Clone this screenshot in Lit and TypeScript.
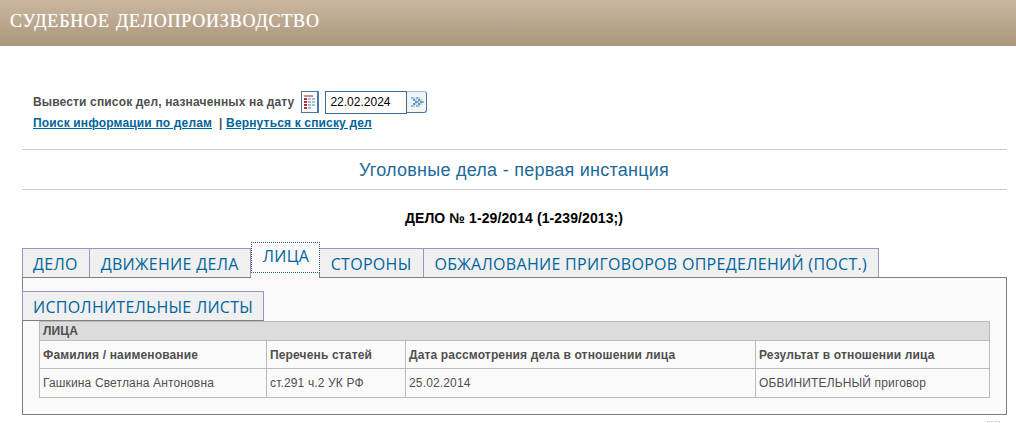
import { LitElement, html, css, svg } from "lit";
import { customElement } from "lit/decorators.js";

const goDots: [number, number, string][] = [
  [1,1,"#8db4d6"],[3,1,"#b9d2e8"],[6,1,"#8db4d6"],[8,1,"#b9d2e8"],
  [3,3,"#5f97c6"],[5,3,"#b9d2e8"],[8,3,"#5f97c6"],[10,3,"#b9d2e8"],
  [5,5,"#5f97c6"],[7,5,"#8db4d6"],[10,5,"#5f97c6"],[12,5,"#8db4d6"],
  [3,7,"#5f97c6"],[5,7,"#b9d2e8"],[8,7,"#5f97c6"],[10,7,"#b9d2e8"],
  [1,9,"#8db4d6"],[3,9,"#b9d2e8"],[6,9,"#8db4d6"],[8,9,"#b9d2e8"],
];

@customElement("app-root")
export class AppRoot extends LitElement {
  static styles = css`
    :host { display: block; height: 423px; overflow: hidden; position: relative; background: #fff; font-family: "Liberation Sans", Arial, sans-serif; font-size: 12px; color: #4f4f4f; }
    .hdr { height: 46px; box-sizing: border-box; padding: 11px 0 0 10px; background: linear-gradient(#cbb7a0, #a9967c); color: #fff; font-family: "Liberation Serif", serif; font-size: 18px; line-height: 20px; letter-spacing: 0.8px; word-spacing: 1px; text-shadow: 0 0 1px rgba(255,255,255,.6); }
    .filter { padding: 44px 0 0 33px; height: 59px; font-weight: bold; letter-spacing: .15px; }
    .row1 { display: flex; align-items: center; height: 24px; }
    .lbl { margin-right: 7px; }
    .cal { width: 18px; height: 22px; box-sizing: border-box; border: 2px solid #4a77a3; border-width: 1px 2px 1px 1px; display: flex; align-items: center; justify-content: center; background: #fbfbfb; margin-right: 6px; }
    .input { width: 82px; height: 23px; box-sizing: border-box; border: 1px solid #3f6a94; padding-left: 4px; font-weight: normal; color: #000; line-height: 21px; font-size: 12px; letter-spacing: 0; }
    .go { width: 20px; height: 22px; box-sizing: border-box; border: 1px solid #9db8d0; border-left: none; border-radius: 0 3px 3px 0; border-right-color:#4a77a3; border-bottom-color:#4a77a3; display: flex; align-items: center; justify-content: center; background: #f4f4f4; }
    .links { margin-top: 2px; line-height: 14px; letter-spacing: .16px; }
    a { color: #00659c; text-decoration: underline; }
    .rule { margin: 0 9px 0 22px; border-top: 1px solid #ccc; }
    .title { height: 39px; line-height: 41px; text-align: center; font-size: 18px; color: #1d6a9a; margin: 0 0 0 22px; padding-right: 10px; letter-spacing: .25px; }
    .case { height: 58px; box-sizing: border-box; padding-top: 21px; line-height: 15px; text-align: center; font-weight: bold; font-size: 14px; letter-spacing: .1px; color: #000; margin-left: 22px; padding-right: 10px; }
    .tabs { display: flex; margin-left: 22px; height: 29px; position: relative; z-index: 1; align-items: flex-end; }
    .tab { box-sizing: border-box; height: 29px; padding: 0 11px; border: 1px solid #9a94cc; border-left: none; border-bottom: none; background: #f0f0f0; font-family: "Open Sans", sans-serif; font-size: 16px; letter-spacing: .3px; color: #00659c; line-height: 31px; white-space: nowrap; }
    .tab.first { border-left: 1px solid #9a94cc; padding: 0 11px 0 10px; }
    .wrap { box-sizing: border-box; width: 69px; height: 36px; margin-bottom: -1px; background: #fafafa; border-right: 1px solid #808080; position: relative; }
    .tab.on { width: 69px; height: 31px; background: #fafafa; border: 1px dotted #2b5a70; line-height: 26px; padding: 0 11px; }
    .panel { margin: 0 9px 0 22px; height: 138px; box-sizing: border-box; border: 1px solid #808080; background: #fafafa; padding-top: 13px; }
    .tabs2 { margin-left: -1px; height: 30px; }
    .tabs2 .tab { height: 30px; border-bottom: 1px solid #808080; padding: 0 10px; letter-spacing: .26px; }
    table { border-collapse: collapse; table-layout: fixed; margin-left: 16px; width: 951px; font-size: 12px; color: #4f4f4f; letter-spacing: .15px; }
    td, th { border: 1px solid #bbb; padding: 0 3px; text-align: left; }
    th { font-weight: bold; height: 27px; }
    td { height: 28px; }
    .cap { background: #dcdcdc; height: 18px; line-height: 18px; }
    .mark { position: absolute; left: 987px; top: 421px; width: 11px; height: 6px; border: 1px solid #ddd; }
  `;
  render() {
    return html`
      <div class="hdr">СУДЕБНОЕ ДЕЛОПРОИЗВОДСТВО</div>
      <div class="filter">
        <div class="row1">
          <span class="lbl">Вывести список дел, назначенных на дату</span>
          <span class="cal"><svg width="13" height="16" viewBox="0 0 13 16">
            <rect x="1" y="1" width="9" height="2" fill="#c98f8f"/>
            <g fill="#a33"><rect x="1" y="4" width="3" height="2"/><rect x="1" y="7" width="3" height="2"/><rect x="1" y="10" width="3" height="2"/><rect x="1" y="13" width="3" height="2"/></g>
            <g fill="#a9c0da"><rect x="5" y="4" width="3" height="2"/><rect x="9" y="4" width="3" height="2"/><rect x="5" y="7" width="3" height="2"/><rect x="9" y="7" width="3" height="2"/><rect x="5" y="10" width="3" height="2"/><rect x="9" y="10" width="3" height="2"/><rect x="5" y="13" width="3" height="2"/></g>
          </svg></span>
          <span class="input">22.02.2024</span>
          <span class="go"><svg width="14" height="12" viewBox="0 0 14 12">
            ${goDots.map(([x, y, c]) => svg`<rect x=${x} y=${y} width="2" height="2" fill=${c}></rect>`)}
          </svg></span>
        </div>
        <div class="links"><a href="#">Поиск информации по делам</a> &nbsp;| <a href="#">Вернуться к списку дел</a></div>
      </div>
      <div class="rule"></div>
      <div class="title">Уголовные дела - первая инстанция</div>
      <div class="rule"></div>
      <div class="case">ДЕЛО № 1-29/2014 (1-239/2013;)</div>
      <div class="tabs">
        <div class="tab first">ДЕЛО</div>
        <div class="tab">ДВИЖЕНИЕ ДЕЛА</div>
        <div class="wrap"><div class="tab on">ЛИЦА</div></div>
        <div class="tab">СТОРОНЫ</div>
        <div class="tab">ОБЖАЛОВАНИЕ ПРИГОВОРОВ ОПРЕДЕЛЕНИЙ (ПОСТ.)</div>
      </div>
      <div class="panel">
        <div class="tabs tabs2"><div class="tab first">ИСПОЛНИТЕЛЬНЫЕ ЛИСТЫ</div></div>
        <table>
          <colgroup><col style="width:227px"><col style="width:139px"><col style="width:350px"><col style="width:234px"></colgroup>
          <tr><th class="cap" colspan="4">ЛИЦА</th></tr>
          <tr><th>Фамилия / наименование</th><th>Перечень статей</th><th>Дата рассмотрения дела в отношении лица</th><th>Результат в отношении лица</th></tr>
          <tr><td>Гашкина Светлана Антоновна</td><td>ст.291 ч.2 УК РФ</td><td>25.02.2014</td><td>ОБВИНИТЕЛЬНЫЙ приговор</td></tr>
        </table>
      </div>
      <div class="mark"></div>
    `;
  }
}
